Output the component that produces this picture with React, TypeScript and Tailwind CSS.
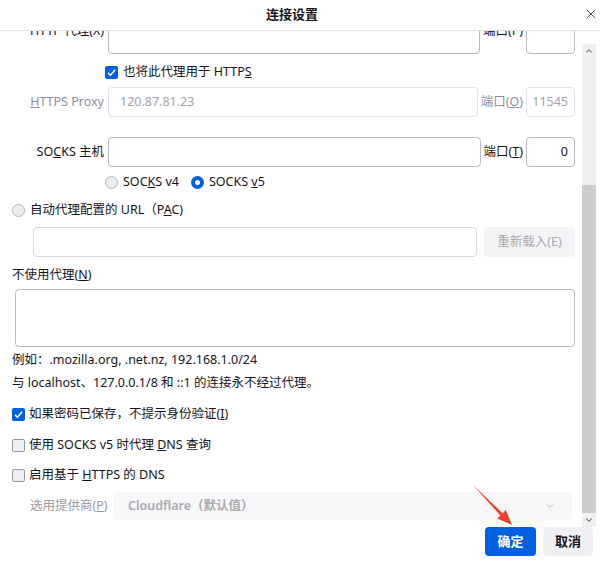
import React from 'react';
import { ChevronDown, ChevronUp, X } from 'lucide-react';

const Check: React.FC<{ checked?: boolean }> = ({ checked }) =>
  checked ? (
    <span className="w-[13px] h-[13px] rounded-[2px] bg-[#0061e0] flex items-center justify-center shrink-0">
      <svg width="11" height="11" viewBox="0 0 11 11">
        <path d="M2 5.8 L4.4 8.2 L9.2 2.8" fill="none" stroke="white" strokeWidth="1.6" />
      </svg>
    </span>
  ) : (
    <span className="w-[13px] h-[13px] rounded-[2px] border border-[#9a9aa2] bg-[#f0f0f4] shrink-0" />
  );

const Radio: React.FC<{ checked?: boolean; className?: string }> = ({ checked, className }) =>
  checked ? (
    <span className={`block w-[13px] h-[13px] rounded-full border-[4px] border-[#0061e0] bg-white shrink-0 ${className ?? ''}`} />
  ) : (
    <span className={`block w-[13px] h-[13px] rounded-full border border-[#b4b4ba] bg-[#ececf0] shrink-0 ${className ?? ''}`} />
  );

const ProxyRow: React.FC<{
  label: React.ReactNode;
  value?: string;
  portLabel: React.ReactNode;
  port?: string;
  disabled?: boolean;
  clipped?: boolean;
  className?: string;
}> = ({ label, value, portLabel, port, disabled, clipped, className }) => {
  const labelTone = disabled ? 'text-[#8f8f9d]' : '';
  const labelPos = clipped ? 'self-start leading-[13px]' : '';
  return (
    <div className={`flex items-center h-[30px] ${className ?? ''}`}>
      <span className={`w-[92px] text-right shrink-0 ${labelTone} ${labelPos}`}>{label}</span>
      <div
        className={`ml-[4px] flex-1 h-full rounded-[4px] border flex items-center px-[11px] ${
          disabled ? 'border-[#e2e2e6] text-[#a4a4ac]' : 'border-[#b8b8be]'
        }`}
      >
        {value}
      </div>
      <span className={`px-[3px] shrink-0 ${labelTone} ${labelPos}`}>{portLabel}</span>
      <div
        className={`w-[49px] h-full rounded-[4px] border flex items-center justify-end px-[6px] shrink-0 ${
          disabled ? 'border-[#e2e2e6] text-[#a4a4ac]' : 'border-[#b8b8be]'
        }`}
      >
        {port}
      </div>
    </div>
  );
};

const App: React.FC = () => {
  return (
    <div
      className="relative w-[600px] h-[562px] bg-white text-[12.5px] text-[#15141a] flex flex-col overflow-hidden"
      style={{ fontFamily: '"Noto Sans", "Noto Sans CJK SC", sans-serif' }}
    >
      <header className="h-[31px] border-b border-[#e0e0e6] flex items-center justify-center pr-4 relative shrink-0">
        <span className="font-bold text-[13px]">连接设置</span>
        <X size={16} strokeWidth={1.3} className="absolute right-[1px] top-[6px] text-[#333]" />
      </header>

      <div className="flex h-[496px] shrink-0">
        <div className="flex-1 overflow-hidden pl-[12px] pr-[7px]">
          <div className="mt-[-7px]">
            <ProxyRow clipped label="HTTP 代理(X)" portLabel="端口(P)" />

            <div className="flex items-center h-[24px] mt-[6px] pl-[93px] gap-[5px]">
              <Check checked />
              <span>
                也将此代理用于 HTTP<u>S</u>
              </span>
            </div>

            <ProxyRow
              className="mt-[3px]"
              disabled
              label={
                <>
                  <u>H</u>TTPS Proxy
                </>
              }
              value="120.87.81.23"
              portLabel={
                <>
                  端口(<u>O</u>)
                </>
              }
              port="11545"
            />

            <ProxyRow
              className="mt-[20px]"
              label={
                <>
                  SO<u>C</u>KS 主机
                </>
              }
              portLabel={
                <>
                  端口(<u>T</u>)
                </>
              }
              port="0"
            />

            <div className="flex items-center h-[24px] mt-[3px] pl-[93px]">
              <Radio />
              <span className="ml-[5px]">
                SOC<u>K</u>S v4
              </span>
              <Radio checked className="ml-[12px]" />
              <span className="ml-[5px]">
                SOCKS <u>v</u>5
              </span>
            </div>

            <div className="flex items-center h-[24px] mt-[4px] gap-[5px]">
              <Radio />
              <span>
                自动代理配置的 URL（P<u>A</u>C)
              </span>
            </div>

            <div className="flex items-center h-[30px] mt-[5px] pl-[21px] gap-[7px]">
              <div className="flex-1 h-full rounded-[4px] border border-[#d8d8de]" />
              <button className="w-[91px] h-full rounded-[4px] bg-[#f4f4f6] text-[#a9a9b0]">重新载入(E)</button>
            </div>

            <div className="flex items-center h-[22px] mt-[7px]">
              不使用代理(<u>N</u>)
            </div>

            <div className="mt-[3px] ml-[3px] h-[58px] rounded-[4px] border border-[#b8b8be]" />

            <div className="flex items-center h-[20px] mt-[3px]">例如：.mozilla.org, .net.nz, 192.168.1.0/24</div>
            <div className="flex items-center h-[20px] mt-[3px]">
              与 localhost、127.0.0.1/8 和 ::1 的连接永不经过代理。
            </div>

            <div className="flex items-center h-[24px] mt-[9px] gap-[4px]">
              <Check checked />
              <span>
                如果密码已保存，不提示身份验证(<u>I</u>)
              </span>
            </div>
            <div className="flex items-center h-[24px] mt-[7px] gap-[4px]">
              <Check />
              <span>
                使用 SOCKS v5 时代理 <u>D</u>NS 查询
              </span>
            </div>
            <div className="flex items-center h-[24px] mt-[6px] gap-[4px]">
              <Check />
              <span>
                启用基于 <u>H</u>TTPS 的 DNS
              </span>
            </div>

            <div className="flex items-center h-[28px] mt-[5px] pl-[18px]">
              <span className="text-[#9a9aa2] w-[83px] shrink-0">
                选用提供商(<u>P</u>)
              </span>
              <div className="flex-1 h-full mr-[3px] rounded-[4px] bg-[#f7f7f9] flex items-center justify-between pl-[15px] pr-[16px]">
                <span className="font-semibold text-[#a9a9b0]">Cloudflare（默认值）</span>
                <ChevronDown size={12} className="text-[#c4c4ca]" />
              </div>
            </div>
          </div>
        </div>

        <div className="w-[14px] mr-[4px] mt-[13px] h-[483px] bg-[#f0f0f0] flex flex-col shrink-0">
          <div className="h-[14px] flex items-center justify-center">
            <ChevronUp size={10} strokeWidth={2.5} className="text-[#606060]" />
          </div>
          <div className="h-[127px]" />
          <div className="h-[328px] bg-[#cdcdcd]" />
          <div className="h-[14px] flex items-center justify-center">
            <ChevronDown size={10} strokeWidth={2.5} className="text-[#606060]" />
          </div>
        </div>
      </div>

      <footer className="flex justify-end gap-[7px] pr-[7px] h-[35px]">
        <button className="w-[51px] h-[29px] rounded-[4px] bg-[#0061e0] text-white font-bold text-[13px]">确定</button>
        <button className="w-[50px] h-[29px] rounded-[4px] bg-[#f0f0f4] font-bold text-[13px]">取消</button>
      </footer>

      <svg className="absolute left-0 top-0 pointer-events-none" width="600" height="562">
        <polygon
          points="473,485 502.6,513.3 505.8,510.1 512,525 497.2,518.5 500.4,515.4"
          fill="#ec3b2f"
        />
      </svg>
    </div>
  );
};

export default App;
